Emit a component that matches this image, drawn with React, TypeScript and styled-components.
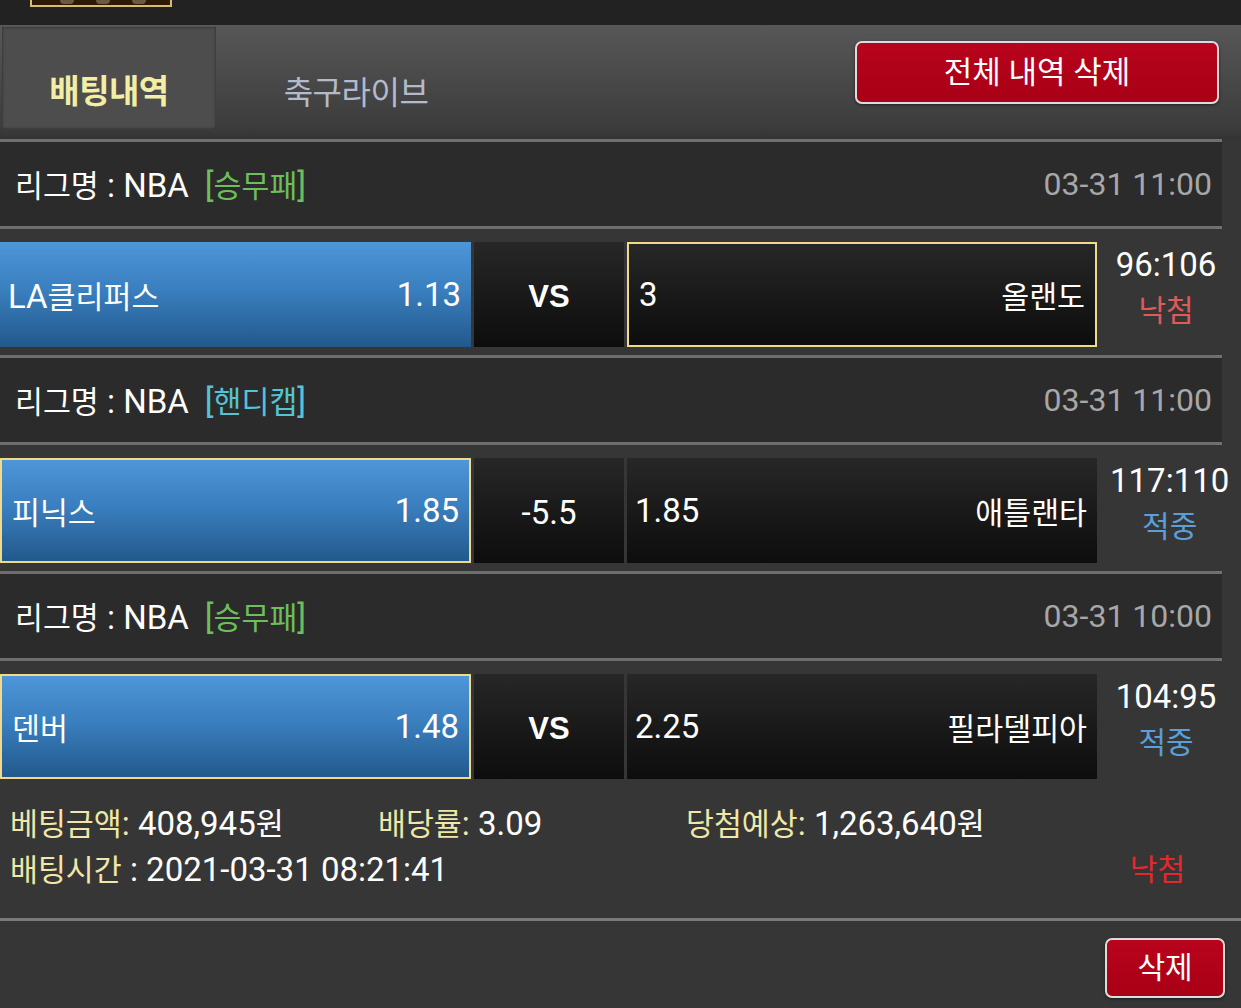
import React from "react";
import styled, { createGlobalStyle } from "styled-components";

const Global = createGlobalStyle`
  html, body { margin: 0; padding: 0; background: #363636; }
  body { font-family: Roboto, "Noto Sans CJK KR", sans-serif; color: #fff; }
  * { box-sizing: border-box; }
`;

const Page = styled.div`
  width: 1241px;
  min-height: 1008px;
  background: #363636;
  overflow: hidden;
`;

const Han = styled.span`
  font-size: 0.92em;
`;

const HANGUL = /([\uAC00-\uD7A3\u3131-\u318E]+)/;

function Mixed({ text }: { text: string }) {
  const parts = text.split(HANGUL);
  return (
    <span>
      {parts.map((p, i) =>
        p === "" ? null : HANGUL.test(p) ? <Han key={i}>{p}</Han> : <React.Fragment key={i}>{p}</React.Fragment>
      )}
    </span>
  );
}

const TopBar = styled.div`
  height: 25px;
  background: #222;
  padding-left: 30px;
`;

const LogoStub = styled.div`
  width: 142px;
  height: 7px;
  background: #2a1a06;
  border: 2px solid #d9bb6c;
  border-top: none;
  display: flex;
  gap: 22px;
  padding-left: 28px;
  align-items: flex-start;
`;

const LogoDot = styled.span`
  width: 14px;
  height: 4px;
  background: #6b5a40;
  border-radius: 0 0 4px 4px;
`;

const TabBar = styled.div`
  height: 114px;
  background: linear-gradient(#575757, #3c3c3c 90%, #333);
  display: flex;
  align-items: flex-start;
  padding: 2px 22px 0 2px;
`;

const Tab = styled.div<{ $active?: boolean }>`
  width: ${(p) => (p.$active ? "214px" : "276px")};
  height: 102px;
  margin-right: 2px;
  display: flex;
  align-items: flex-end;
  justify-content: center;
  padding-bottom: 16px;
  font-size: ${(p) => (p.$active ? "33px" : "32px")};
  font-weight: ${(p) => (p.$active ? 700 : 400)};
  color: ${(p) => (p.$active ? "#f2eea6" : "#b3bacb")};
  background: ${(p) => (p.$active ? "#4d4d4d" : "transparent")};
  box-shadow: ${(p) => (p.$active ? "inset 0 0 3px rgba(0,0,0,0.55)" : "none")};
  letter-spacing: -0.5px;
`;

const Spacer = styled.div`
  flex: 1;
`;

const RedButton = styled.button<{ $w: number; $h: number; $fs: number }>`
  width: ${(p) => p.$w}px;
  height: ${(p) => p.$h}px;
  background: linear-gradient(#b8041c, #a80016);
  border: 2px solid #dcdcdc;
  border-radius: 7px;
  color: #fff;
  font-family: Roboto, "Noto Sans CJK KR", sans-serif;
  font-size: ${(p) => p.$fs}px;
  padding: 0 0 6px;
  display: flex;
  align-items: center;
  justify-content: center;
  box-shadow: 0 1px 3px rgba(0, 0, 0, 0.5);
`;

const TopButtonWrap = styled.div`
  padding-top: 14px;
`;

const Group = styled.div`
  width: 1222px;
`;

const Line = styled.div`
  height: 3px;
  background: #6f6f6f;
`;

const LeagueHeader = styled.div`
  height: 84px;
  background: #2b2b2b;
  display: flex;
  align-items: center;
  padding: 0 10px 0 15px;
  font-size: 33px;
  white-space: pre;
`;

const Tag = styled.span<{ $color: string }>`
  color: ${(p) => p.$color};
  margin-left: 16px;
`;

const Time = styled.span`
  margin-left: auto;
  color: #a7a7a7;
  font-size: 32px;
`;

const MatchRow = styled.div`
  padding: 13px 0 8px;
  display: grid;
  grid-template-columns: 471px 150px 470px 1fr;
  column-gap: 3px;
  height: 126px;
`;

const TeamCell = styled.div<{ $home?: boolean; $sel?: boolean }>`
  height: 105px;
  display: flex;
  align-items: center;
  justify-content: space-between;
  padding: 0 10px 0 ${(p) => (p.$sel ? "10px" : "8px")};
  font-size: 33px;
  border: ${(p) => (p.$sel ? "2px solid #f1d98c" : "none")};
  background: ${(p) =>
    p.$home
      ? "linear-gradient(#4d96d8, #3a7fbf 45%, #22598c)"
      : "linear-gradient(#272727, #171717 60%, #0d0d0d)"};
`;

const MidCell = styled.div<{ $bold?: boolean }>`
  height: 105px;
  display: flex;
  align-items: center;
  justify-content: center;
  font-size: ${(p) => (p.$bold ? "31px" : "33px")};
  font-weight: ${(p) => (p.$bold ? 700 : 400)};
  font-family: ${(p) => (p.$bold ? '"Liberation Sans", Arial, sans-serif' : "inherit")};
  padding-top: 4px;
  background: linear-gradient(#272727, #171717 60%, #0d0d0d);
`;

const ScoreCol = styled.div`
  height: 105px;
  display: flex;
  flex-direction: column;
  align-items: center;
  padding-left: 10px;
  font-size: 33px;
  line-height: 46px;
  white-space: nowrap;
`;

const Result = styled.span<{ $win: boolean }>`
  font-size: 30px;
  color: ${(p) => (p.$win ? "#5b9ed8" : "#e05a5a")};
`;

const Footer = styled.div`
  height: 131px;
  padding: 14px 0 0 10px;
  font-size: 33px;
  line-height: 45px;
`;

const InfoLine = styled.div`
  display: grid;
  grid-template-columns: 368px 308px auto;
`;

const InfoLine2 = styled.div`
  display: flex;
  justify-content: space-between;
  padding-right: 56px;
`;

const Label = styled.span`
  color: #f0e7a8;
`;

const FooterResult = styled.span`
  color: #e4282b;
  font-size: 30px;
`;

const FullLine = styled.div`
  height: 3px;
  background: #7a7a7a;
`;

const Bottom = styled.div`
  display: flex;
  justify-content: flex-end;
  padding: 17px 16px 0 0;
`;

type Bet = {
  kind: string;
  kindColor: string;
  time: string;
  home: string;
  homeOdds: string;
  mid: string;
  midBold: boolean;
  away: string;
  awayOdds: string;
  sel: "home" | "away";
  score: string;
  win: boolean;
};

const bets: Bet[] = [
  {
    kind: "[승무패]",
    kindColor: "#6cbf5a",
    time: "03-31 11:00",
    home: "LA클리퍼스",
    homeOdds: "1.13",
    mid: "VS",
    midBold: true,
    away: "올랜도",
    awayOdds: "3",
    sel: "away",
    score: "96:106",
    win: false,
  },
  {
    kind: "[핸디캡]",
    kindColor: "#55c4d2",
    time: "03-31 11:00",
    home: "피닉스",
    homeOdds: "1.85",
    mid: "-5.5",
    midBold: false,
    away: "애틀랜타",
    awayOdds: "1.85",
    sel: "home",
    score: "117:110",
    win: true,
  },
  {
    kind: "[승무패]",
    kindColor: "#6cbf5a",
    time: "03-31 10:00",
    home: "덴버",
    homeOdds: "1.48",
    mid: "VS",
    midBold: true,
    away: "필라델피아",
    awayOdds: "2.25",
    sel: "home",
    score: "104:95",
    win: true,
  },
];

export default function App() {
  return (
    <Page>
      <Global />
      <TopBar>
        <LogoStub>
          <LogoDot />
          <LogoDot />
          <LogoDot />
        </LogoStub>
      </TopBar>
      <TabBar>
        <Tab $active>배팅내역</Tab>
        <Tab>축구라이브</Tab>
        <Spacer />
        <TopButtonWrap>
          <RedButton $w={364} $h={63} $fs={31}>전체 내역 삭제</RedButton>
        </TopButtonWrap>
      </TabBar>
      {bets.map((b, i) => (
        <Group key={i}>
          <Line />
          <LeagueHeader>
            <Mixed text="리그명 : NBA" />
            <Tag $color={b.kindColor}>
              <Mixed text={b.kind} />
            </Tag>
            <Time>{b.time}</Time>
          </LeagueHeader>
          <Line />
          <MatchRow>
            <TeamCell $home $sel={b.sel === "home"}>
              <Mixed text={b.home} />
              <span>{b.homeOdds}</span>
            </TeamCell>
            <MidCell $bold={b.midBold}>{b.mid}</MidCell>
            <TeamCell $sel={b.sel === "away"}>
              <span>{b.awayOdds}</span>
              <Mixed text={b.away} />
            </TeamCell>
            <ScoreCol>
              <span>{b.score}</span>
              <Result $win={b.win}>{b.win ? "적중" : "낙첨"}</Result>
            </ScoreCol>
          </MatchRow>
        </Group>
      ))}
      <Footer>
        <InfoLine>
          <span>
            <Label>
              <Mixed text="베팅금액:" />
            </Label>{" "}
            <Mixed text="408,945원" />
          </span>
          <span>
            <Label>
              <Mixed text="배당률:" />
            </Label>{" "}
            3.09
          </span>
          <span>
            <Label>
              <Mixed text="당첨예상:" />
            </Label>{" "}
            <Mixed text="1,263,640원" />
          </span>
        </InfoLine>
        <InfoLine2>
          <span>
            <Label>
              <Mixed text="배팅시간" />
            </Label>{" "}
            : 2021-03-31 08:21:41
          </span>
          <FooterResult>낙첨</FooterResult>
        </InfoLine2>
      </Footer>
      <FullLine />
      <Bottom>
        <RedButton $w={120} $h={60} $fs={30}>삭제</RedButton>
      </Bottom>
    </Page>
  );
}
